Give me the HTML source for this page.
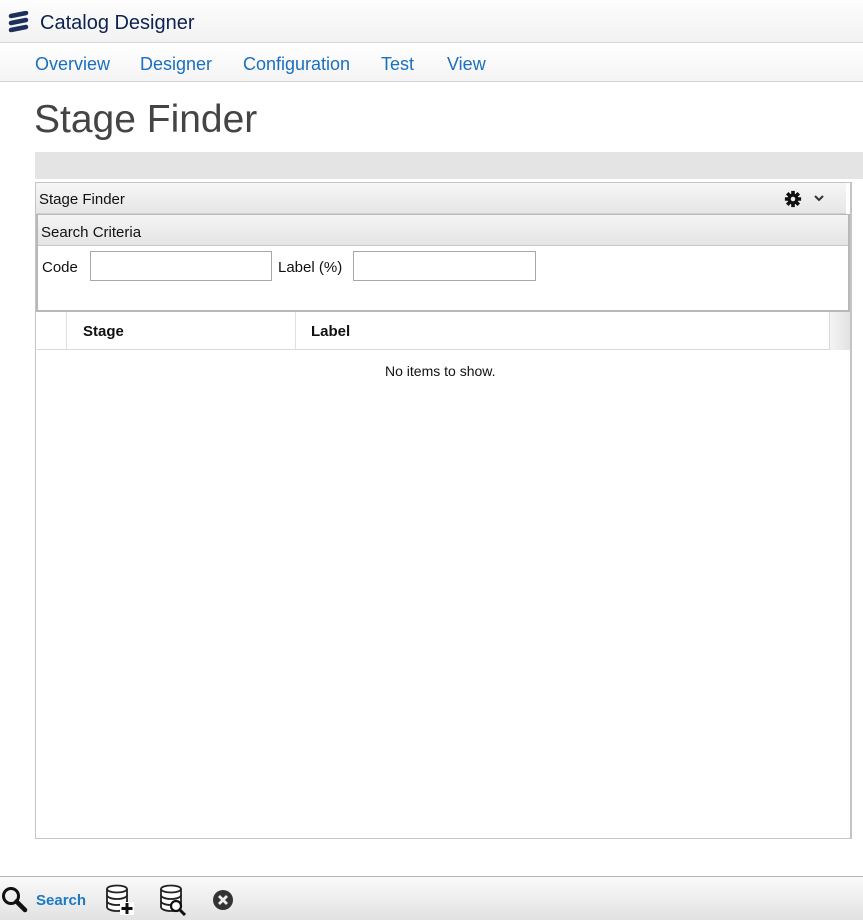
<!DOCTYPE html>
<html><head><style>
*{margin:0;padding:0;box-sizing:border-box}
body{width:863px;height:920px;position:relative;background:#fff;font-family:"Liberation Sans",Arial,sans-serif;overflow:hidden}
.a{position:absolute}
</style></head><body>
<div class="a" style="left:0;top:0;width:863px;height:43px;background:linear-gradient(#fdfdfd,#f2f2f2);border-bottom:1px solid #d8d8d8"></div>
<svg class="a" style="left:8px;top:11px" width="22" height="22" viewBox="0 0 22 22"><g stroke="#1f2f5c" stroke-width="4.5" stroke-linecap="round"><line x1="3" y1="5" x2="18" y2="2"/><line x1="3" y1="12" x2="18" y2="9"/><line x1="3" y1="19" x2="18" y2="16"/></g></svg>
<div class="a" style="left:40px;top:12px;font-size:20px;color:#0d2252">Catalog Designer</div>
<div class="a" style="left:0;top:44px;width:863px;height:38px;background:linear-gradient(#fff,#f4f4f4);border-bottom:1px solid #d4d4d4"></div>
<div class="a" style="top:54px;left:0;font-size:18px;color:#1a6fbf;white-space:nowrap">
<span class="a" style="left:35px">Overview</span><span class="a" style="left:140px">Designer</span><span class="a" style="left:243px">Configuration</span><span class="a" style="left:381px">Test</span><span class="a" style="left:447px">View</span></div>
<div class="a" style="left:34px;top:98px;font-size:39px;color:#444">Stage Finder</div>
<div class="a" style="left:35px;top:152px;width:828px;height:27px;background:#e4e4e4"></div>
<div class="a" style="left:35px;top:182px;width:817px;height:657px;border:1px solid #c4c4c4;border-right:2px solid #c4c4c4"></div>
<div class="a" style="left:36px;top:183px;width:810px;height:31px;background:linear-gradient(#f6f6f6,#e6e6e6);border-bottom:1px solid #d0d0d0"></div>
<div class="a" style="left:39px;top:191px;font-size:15px;color:#111">Stage Finder</div>
<svg class="a" style="left:783px;top:190px" width="20" height="18" viewBox="0 0 20 20"><g fill="#111"><circle cx="10" cy="10" r="6"/><g stroke="#111" stroke-width="4"><line x1="10" y1="1" x2="10" y2="19"/><line x1="1" y1="10" x2="19" y2="10"/><line x1="3.6" y1="3.6" x2="16.4" y2="16.4"/><line x1="16.4" y1="3.6" x2="3.6" y2="16.4"/></g></g><circle cx="10" cy="10" r="2.5" fill="#eee"/></svg>
<svg class="a" style="left:813px;top:194px" width="12" height="8" viewBox="0 0 12 8"><polyline points="2,2 6,6 10,2" fill="none" stroke="#333" stroke-width="2"/></svg>
<div class="a" style="left:36px;top:214px;width:814px;height:98px;border:2px solid #b8b8b8;border-top:1px solid #b8b8b8"></div>
<div class="a" style="left:38px;top:215px;width:810px;height:31px;background:linear-gradient(#f5f5f5,#e4e4e4);border-bottom:1px solid #c8c8c8"></div>
<div class="a" style="left:41px;top:224px;font-size:15px;color:#111">Search Criteria</div>
<div class="a" style="left:42px;top:259px;font-size:15px;color:#111">Code</div>
<div class="a" style="left:90px;top:251px;width:182px;height:30px;border:1px solid #a8a8a8"></div>
<div class="a" style="left:278px;top:259px;font-size:15px;color:#111">Label (%)</div>
<div class="a" style="left:353px;top:251px;width:183px;height:30px;border:1px solid #a8a8a8"></div>
<div class="a" style="left:37px;top:312px;width:793px;height:38px;border-bottom:1px solid #d8d8d8;border-right:1px solid #d8d8d8"></div>
<div class="a" style="left:66px;top:312px;width:1px;height:38px;background:#e0e0e0"></div>
<div class="a" style="left:295px;top:312px;width:1px;height:38px;background:#e0e0e0"></div>
<div class="a" style="left:830px;top:312px;width:20px;height:38px;background:linear-gradient(90deg,#f4f4f4,#e2e2e2)"></div>
<div class="a" style="left:83px;top:323px;font-size:15px;font-weight:bold;color:#111">Stage</div>
<div class="a" style="left:311px;top:323px;font-size:15px;font-weight:bold;color:#111">Label</div>
<div class="a" style="left:385px;top:363px;font-size:14px;color:#111">No items to show.</div>
<div class="a" style="left:0;top:876px;width:863px;height:44px;background:linear-gradient(#fafafa,#e2e2e2);border-top:1px solid #aeb3bb"></div>
<svg class="a" style="left:1px;top:886px" width="28" height="28" viewBox="0 0 28 28"><circle cx="10" cy="10" r="7.5" fill="none" stroke="#111" stroke-width="3"/><line x1="15.5" y1="15.5" x2="24" y2="24" stroke="#111" stroke-width="4.5" stroke-linecap="round"/></svg>
<div class="a" style="left:36px;top:892px;font-size:15px;font-weight:bold;color:#1a7ac4">Search</div>
<svg class="a" style="left:105px;top:884px" width="30" height="32" viewBox="0 0 30 32"><g fill="#fff" stroke="#222" stroke-width="1.8"><path d="M2 5v18c0 2 4 4 10 4s10-2 10-4V5"/><ellipse cx="12" cy="5" rx="10" ry="3.5"/><path d="M2 11c0 2 4 4 10 4s10-2 10-4M2 17c0 2 4 4 10 4s10-2 10-4"/></g><rect x="15" y="18" width="14" height="13" fill="#fff"/><path d="M22 19v11M16.5 24.5h11" stroke="#111" stroke-width="3"/></svg>
<svg class="a" style="left:159px;top:884px" width="30" height="32" viewBox="0 0 30 32"><g fill="#fff" stroke="#222" stroke-width="1.8"><path d="M2 5v18c0 2 4 4 10 4s10-2 10-4V5"/><ellipse cx="12" cy="5" rx="10" ry="3.5"/><path d="M2 11c0 2 4 4 10 4s10-2 10-4M2 17c0 2 4 4 10 4s10-2 10-4"/></g><circle cx="17" cy="22" r="5" fill="#fff" stroke="#111" stroke-width="2.2"/><line x1="20.5" y1="25.5" x2="26" y2="31" stroke="#111" stroke-width="3"/></svg>
<svg class="a" style="left:212px;top:889px" width="22" height="22" viewBox="0 0 22 22"><circle cx="11" cy="11" r="10" fill="#333"/><path d="M7 7l8 8M15 7l-8 8" stroke="#eee" stroke-width="2.8"/></svg>
</body></html>
